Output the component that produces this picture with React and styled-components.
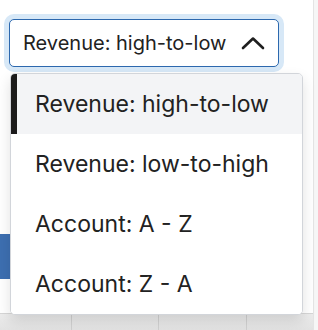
import React, { useState } from 'react'
import styled, { createGlobalStyle } from 'styled-components'

const GlobalStyle = createGlobalStyle`
  html, body {
    margin: 0;
    padding: 0;
    background: #ffffff;
    font-family: Inter, "Noto Sans", "Liberation Sans", sans-serif;
  }
`

const Shell = styled.div`
  display: flex;
  width: 318px;
  height: 330px;
  overflow: hidden;
`

const Main = styled.main`
  flex: 1;
  display: flex;
  flex-direction: column;
  min-width: 0;
`

const ScrollTrack = styled.div`
  width: 4px;
  background: #f6f6f6;
  border-left: 1px solid #e4e4e4;
`

const SortWrap = styled.div`
  position: relative;
  margin: 19px 0 0 9px;
  width: 270px;
`

const SortButton = styled.button`
  display: flex;
  align-items: center;
  justify-content: space-between;
  box-sizing: border-box;
  width: 270px;
  height: 48px;
  padding: 0 13px 0 13px;
  background: #ffffff;
  border: 1px solid #2c68ae;
  border-radius: 5px;
  box-shadow: 0 0 0 5px #d7e8f7;
  font-family: inherit;
  font-size: 20px;
  color: #222222;
  cursor: pointer;
`

const Menu = styled.ul`
  position: absolute;
  top: 54px;
  left: 1px;
  z-index: 10;
  box-sizing: border-box;
  width: 293px;
  margin: 0;
  padding: 0;
  list-style: none;
  background: #ffffff;
  border: 1px solid #d2d5da;
  border-radius: 5px;
  box-shadow: 0 6px 14px rgba(0, 0, 0, 0.12);
  overflow: hidden;
`

const Option = styled.li`
  display: flex;
  align-items: center;
  height: 60px;
  padding-left: 24px;
  font-size: 23px;
  color: #222222;
  background: ${p => (p.$active ? '#f3f4f6' : '#ffffff')};
  box-shadow: ${p => (p.$active ? 'inset 6px 0 0 #1b1b1b' : 'none')};
  cursor: pointer;
`

const Body = styled.div`
  flex: 1;
  display: flex;
  flex-direction: column;
  justify-content: flex-end;
`

const ActionButton = styled.button`
  width: 140px;
  height: 45px;
  margin-bottom: 34px;
  border: none;
  background: #3d6fb1;
  color: #ffffff;
  font-family: inherit;
`

const TableHead = styled.div`
  display: grid;
  grid-template-columns: 72px 87px 88px 1fr;
  height: 16px;
  background: linear-gradient(#ececec, #e2e2e2);
  border-top: 1px solid #d6d6d6;
`

const HeadCell = styled.div`
  border-right: 1px solid #d0d0d0;
  &:last-child {
    border-right: none;
  }
`

const Chevron = () => (
  <svg width="24" height="14" viewBox="0 0 24 14" fill="none">
    <path d="M2 12 L12 2.5 L22 12" stroke="#1f1f1f" strokeWidth="2.6" strokeLinecap="round" strokeLinejoin="round" />
  </svg>
)

const options = [
  'Revenue: high-to-low',
  'Revenue: low-to-high',
  'Account: A - Z',
  'Account: Z - A',
]

export default function App() {
  const [selected, setSelected] = useState(options[0])
  const [open, setOpen] = useState(true)

  return (
    <>
      <GlobalStyle />
      <Shell>
        <Main>
          <SortWrap>
            <SortButton onClick={() => setOpen(!open)}>
              <span>{selected}</span>
              <Chevron />
            </SortButton>
            {open && (
              <Menu>
                {options.map(o => (
                  <Option
                    key={o}
                    $active={o === selected}
                    onClick={() => {
                      setSelected(o)
                      setOpen(false)
                    }}
                  >
                    {o}
                  </Option>
                ))}
              </Menu>
            )}
          </SortWrap>
          <Body>
            <ActionButton>Export</ActionButton>
            <TableHead>
              <HeadCell />
              <HeadCell />
              <HeadCell />
              <HeadCell />
            </TableHead>
          </Body>
        </Main>
        <ScrollTrack />
      </Shell>
    </>
  )
}
